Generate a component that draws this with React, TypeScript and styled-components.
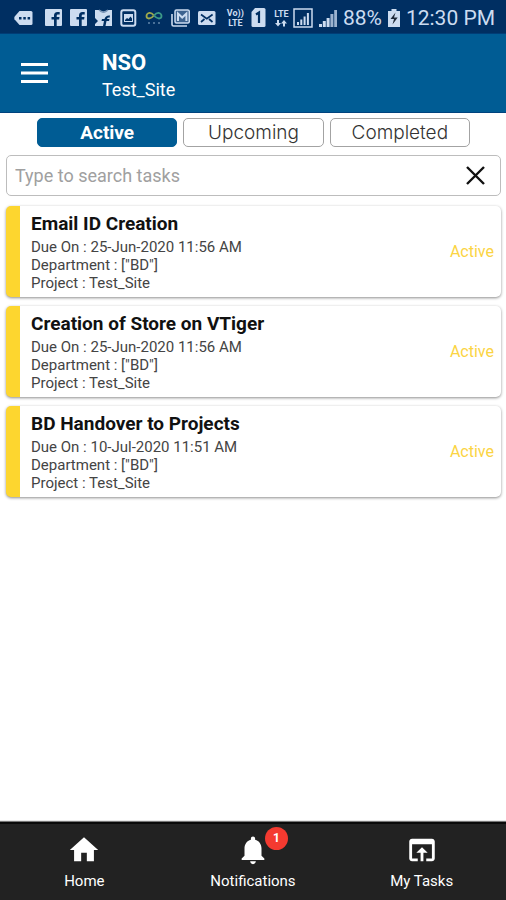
import React, { useState } from 'react';
import styled, { createGlobalStyle } from 'styled-components';

const GlobalStyle = createGlobalStyle`
  *, *::before, *::after { box-sizing: border-box; }
  body { margin: 0; background: #fff; font-family: Roboto, "Liberation Sans", sans-serif; }
  button, input { font-family: inherit; }
`;

const Page = styled.div`
  min-height: 100vh;
  display: flex;
  flex-direction: column;
`;

const StatusBar = styled.div`
  display: flex;
  align-items: center;
  justify-content: space-between;
  height: 34px;
  padding: 2px 11px 0 14px;
  background: #002f62;
  color: #ccdcf0;
  border-bottom: 1px solid #003d76;
`;

const StatusGroup = styled.div<{ $gap: number }>`
  display: flex;
  align-items: center;
  gap: ${({ $gap }) => $gap}px;
  white-space: nowrap;
  svg { display: block; flex: none; }
`;

const StatusText = styled.span`
  font-size: 21px;
  line-height: 24px;
`;

const Network = styled.span`
  display: flex;
  flex-direction: column;
  align-items: center;
  min-width: 19px;
  font-size: 9px;
  font-weight: 700;
  line-height: 10px;
`;

const Header = styled.header`
  display: flex;
  align-items: center;
  gap: 54px;
  height: 79px;
  padding: 0 21px;
  background: #005c94;
  color: #fff;
  border-bottom: 1px solid #00437e;
`;

const IconButton = styled.button`
  display: flex;
  padding: 0;
  border: 0;
  background: none;
  color: inherit;
  cursor: pointer;
`;

const Site = styled.div`
  display: flex;
  flex-direction: column;
  padding-top: 6px;
`;

const SiteTitle = styled.h1`
  margin: 0;
  font-size: 22px;
  font-weight: 700;
  line-height: 28px;
`;

const SiteName = styled.span`
  font-size: 18px;
  line-height: 26px;
`;

const Main = styled.main`
  flex: 1;
  padding: 5px 5px 20px 6px;
`;

const Tabs = styled.div`
  display: grid;
  grid-template-columns: repeat(3, 1fr);
  gap: 6px;
  padding: 0 31px;
`;

const Tab = styled.button<{ $active: boolean }>`
  height: 29px;
  padding: 0;
  border: 1px solid ${({ $active }) => ($active ? '#005c94' : '#a3a3a3')};
  border-radius: 5px;
  background: ${({ $active }) => ($active ? '#005c94' : '#fff')};
  color: ${({ $active }) => ($active ? '#fff' : '#333')};
  font-family: ${({ $active }) => ($active ? 'Roboto' : 'Inter')}, sans-serif;
  font-size: 19px;
  font-weight: ${({ $active }) => ($active ? 700 : 300)};
  line-height: 27px;
  cursor: pointer;
`;

const SearchBox = styled.div`
  display: flex;
  align-items: center;
  height: 41px;
  margin: 8px 0 10px;
  padding: 0 15px 0 8px;
  border: 1px solid #bdbdbd;
  border-radius: 5px;
  color: #111;
`;

const SearchInput = styled.input`
  flex: 1;
  min-width: 0;
  padding: 0;
  border: 0;
  outline: 0;
  background: none;
  color: #222;
  font-size: 18px;
  line-height: 24px;
  &::placeholder { color: #a0a0a0; opacity: 1; }
`;

const TaskList = styled.ul`
  display: flex;
  flex-direction: column;
  gap: 9px;
  margin: 0;
  padding: 0;
  list-style: none;
`;

const TaskCard = styled.li`
  display: flex;
  align-items: center;
  justify-content: space-between;
  min-height: 91px;
  padding: 5px 7px 5px 11px;
  border-left: 14px solid #fdd62f;
  border-radius: 5px;
  background: #fff;
  box-shadow: 0 1px 3px rgba(0, 0, 0, 0.45);
`;

const TaskTitle = styled.h2`
  margin: 0 0 2px;
  color: #111;
  font-size: 19px;
  font-weight: 700;
  line-height: 24px;
`;

const TaskDetail = styled.p`
  margin: 0;
  color: #444;
  font-size: 15px;
  line-height: 18px;
`;

const TaskStatus = styled.span`
  color: #fbd443;
  font-size: 16px;
  line-height: 20px;
`;

const BottomNav = styled.nav`
  position: sticky;
  bottom: 0;
  display: grid;
  grid-template-columns: repeat(3, 1fr);
  height: 78px;
  border-top: 2px solid #0a0a0a;
  background: #222;
  box-shadow: 0 -1px 1px #777;
`;

const NavLink = styled.a`
  display: flex;
  flex-direction: column;
  align-items: center;
  gap: 4px;
  padding-top: 9px;
  color: #fff;
  font-size: 15px;
  line-height: 20px;
  text-decoration: none;
  svg { display: block; }
`;

const NavIcon = styled.span`
  position: relative;
`;

const Badge = styled.span`
  position: absolute;
  top: -6px;
  right: -18px;
  width: 23px;
  height: 23px;
  border-radius: 50%;
  background: #f43a30;
  font-size: 12px;
  font-weight: 700;
  line-height: 23px;
  text-align: center;
`;

const FacebookIcon = () => (
  <svg width="17" height="17" viewBox="0 0 17 17" aria-hidden="true">
    <rect width="17" height="17" rx="1" fill="#ccdcf0" />
    <path d="M9 17v-6.500h-2.500v-2.500h2.500V6.500Q9 3 12.500 3h2.200v2.400h-1.800q-1.200 0-1.200 1.300V8h2.800l-.4 2.500h-2.400V17z" fill="#002f62" />
  </svg>
);

const StatusIcons = () => (
  <StatusGroup $gap={8}>
    <svg width="23" height="16" viewBox="0 0 23 16" aria-hidden="true">
      <path d="M5.500 1H17q1.500 0 1.500 1.500v11q0 1.500-1.500 1.500H5.500L.5 9.200Q0 8 .5 6.800z" fill="#ccdcf0" />
      <path d="M5 7h2.500v2.500H5zM9.300 7h2.500v2.500H9.300zM13.600 7h2.500v2.500h-2.500z" fill="#002f62" />
    </svg>
    <FacebookIcon />
    <FacebookIcon />
    <svg width="17" height="18" viewBox="0 0 17 18" aria-hidden="true">
      <path d="M0 1h4q4.500 5 9 0h4v16H0z" fill="#ccdcf0" />
      <path d="M4 1q4.500 4 9 0" fill="none" stroke="#7f9abb" strokeWidth="1.500" />
      <path d="M8 17l1-5H6.500l.5-2h2.500Q10.500 6 15 6.500l-.5 2.200q-2-.5-2.500 1.300h2.500l-.5 2H11.500l-1 5zM0 9l3 3-3 3z" fill="#002f62" />
    </svg>
    <svg width="17" height="18" viewBox="0 0 17 18" aria-hidden="true">
      <rect x="1.300" y="1.300" width="14" height="15.400" rx="2" fill="none" stroke="#ccdcf0" strokeWidth="2" />
      <path d="M4 5h9v8H4z" fill="#ccdcf0" />
      <path d="M5 11l2-2 1.500 1 2-2.500 1.500 2V12H5z" fill="#002f62" />
    </svg>
    <svg width="18" height="16" viewBox="0 0 18 16" fill="none" aria-hidden="true">
      <path d="M9 5.500Q6.500 2.500 4 3 1.500 3.700 1.500 6T4 8.500Q6.500 8.500 9 5.500" stroke="#9ea94c" strokeWidth="1.800" />
      <path d="M9 5.500Q11.500 2.500 14 3q2.500.7 2.500 3T14 8.500Q11.500 8.500 9 5.500" stroke="#3c9a88" strokeWidth="1.800" />
      <path d="M3 13h2M8 13h2M13 13h2" stroke="#6286ab" strokeWidth="1.500" />
    </svg>
    <svg width="19" height="18" viewBox="0 0 19 18" fill="none" stroke="#ccdcf0" aria-hidden="true">
      <path d="M1 5v10.500Q1 17 2.500 17H16" strokeWidth="1.600" />
      <rect x="4" y="1" width="14.300" height="13" rx="1.500" fill="#3d638f" strokeWidth="1.500" />
      <path d="M7 12V4.500l4.200 4 4.200-4V12" strokeWidth="2" />
    </svg>
    <svg width="18" height="16" viewBox="0 0 18 16" aria-hidden="true">
      <rect y="1" width="17.500" height="14" rx="1.500" fill="#ccdcf0" />
      <path d="M3 4.500l5.800 4.300 5.800-4.300M3 12l3.500-3M14.500 12L11 9" fill="none" stroke="#002f62" strokeWidth="1.700" />
    </svg>
  </StatusGroup>
);

const SignalBars = () => (
  <svg width="18" height="18" viewBox="0 0 18 18" fill="#ccdcf0" aria-hidden="true">
    <path d="M0 15h3v3H0zM3.800 12h3v6h-3zM7.600 9h3v9h-3z" />
    <path d="M11.400 5h3v13h-3zM15.200 1h2.800v17h-2.800z" fill="#9bb3d0" />
  </svg>
);

const PhoneStatus = () => (
  <StatusGroup $gap={6}>
    <Network><span>Vo))</span><span>LTE</span></Network>
    <svg width="15" height="19" viewBox="0 0 15 19" aria-hidden="true">
      <path d="M4 0h9q1.500 0 1.500 1.500v16q0 1.500-1.500 1.500H2Q.5 19 .5 17.500V4z" fill="#ccdcf0" />
      <path d="M5 6.500L8 4.500V15" fill="none" stroke="#002f62" strokeWidth="2.200" />
    </svg>
    <StatusGroup $gap={2}>
      <Network>
        <span>LTE</span>
        <svg width="12" height="8" viewBox="0 0 12 8" fill="#ccdcf0" aria-hidden="true">
          <path d="M2 1h2v3h2L3 7.500 0 4h2zM8 7.500h2v-3h2L9 1 6 4.500h2z" />
        </svg>
      </Network>
      <svg width="20" height="20" viewBox="0 0 20 20" fill="#ccdcf0" aria-hidden="true">
        <rect x="1" y="1" width="18" height="18" fill="none" stroke="#ccdcf0" strokeWidth="1.500" />
        <path d="M4 14h2v3H4zM7.300 11.500h2V17h-2zM10.600 8.500h2V17h-2zM13.900 5h2v12h-2z" />
      </svg>
    </StatusGroup>
    <SignalBars />
    <StatusText>88%</StatusText>
    <svg width="12" height="18" viewBox="0 0 12 18" aria-hidden="true">
      <path d="M3.500 0h5v2H12v16H0V2h3.500z" fill="#ccdcf0" />
      <path d="M7.500 3.500L2.500 10H6l-1.500 5.500L9.700 8.500H6z" fill="#1d2938" />
    </svg>
    <StatusText>12:30 PM</StatusText>
  </StatusGroup>
);

const tasks = [
  { title: 'Email ID Creation', due: '25-Jun-2020 11:56 AM' },
  { title: 'Creation of Store on VTiger', due: '25-Jun-2020 11:56 AM' },
  { title: 'BD Handover to Projects', due: '10-Jul-2020 11:51 AM' },
];

const tabs = ['Active', 'Upcoming', 'Completed'];

export default function App() {
  const [tab, setTab] = useState('Active');
  const [query, setQuery] = useState('');
  const visible = tasks.filter((t) => t.title.toLowerCase().includes(query.toLowerCase()));

  return (
    <Page>
      <GlobalStyle />
      <StatusBar>
        <StatusIcons />
        <PhoneStatus />
      </StatusBar>
      <Header>
        <IconButton type="button" aria-label="Open menu">
          <svg width="27" height="20" viewBox="0 0 27 20" aria-hidden="true">
            <path d="M0 1.500h27M0 10h27M0 18.500h27" stroke="#fff" strokeWidth="3" />
          </svg>
        </IconButton>
        <Site>
          <SiteTitle>NSO</SiteTitle>
          <SiteName>Test_Site</SiteName>
        </Site>
      </Header>
      <Main>
        <Tabs>
          {tabs.map((name) => (
            <Tab key={name} type="button" $active={name === tab} aria-pressed={name === tab} onClick={() => setTab(name)}>
              {name}
            </Tab>
          ))}
        </Tabs>
        <SearchBox>
          <SearchInput
            type="text"
            aria-label="Search tasks"
            placeholder="Type to search tasks"
            value={query}
            onChange={(e) => setQuery(e.target.value)}
          />
          <IconButton type="button" aria-label="Clear search" onClick={() => setQuery('')}>
            <svg width="19" height="19" viewBox="0 0 19 19" aria-hidden="true">
              <path d="M1 1l17 17M18 1L1 18" stroke="currentColor" strokeWidth="2.400" />
            </svg>
          </IconButton>
        </SearchBox>
        <TaskList>
          {visible.map((task) => (
            <TaskCard key={task.title}>
              <div>
                <TaskTitle>{task.title}</TaskTitle>
                <TaskDetail>Due On : {task.due}</TaskDetail>
                <TaskDetail>Department : ["BD"]</TaskDetail>
                <TaskDetail>Project : Test_Site</TaskDetail>
              </div>
              <TaskStatus>Active</TaskStatus>
            </TaskCard>
          ))}
        </TaskList>
      </Main>
      <BottomNav>
        <NavLink href="#home">
          <NavIcon>
            <svg width="34" height="34" viewBox="0 0 24 24" fill="#fff" aria-hidden="true">
              <path d="M10 20v-6h4v6h5v-8h3L12 3 2 12h3v8z" />
            </svg>
          </NavIcon>
          Home
        </NavLink>
        <NavLink href="#notifications">
          <NavIcon>
            <svg width="34" height="34" viewBox="0 0 24 24" fill="#fff" aria-hidden="true">
              <path d="M12 22c1.100 0 2-.9 2-2h-4c0 1.100.89 2 2 2zm6-6v-5c0-3.070-1.640-5.640-4.500-6.320V4c0-.83-.67-1.500-1.500-1.500s-1.500.67-1.500 1.500v.68C7.630 5.360 6 7.920 6 11v5l-2 2v1h16v-1l-2-2z" />
            </svg>
            <Badge>1</Badge>
          </NavIcon>
          Notifications
        </NavLink>
        <NavLink href="#tasks">
          <NavIcon>
            <svg width="34" height="34" viewBox="0 0 24 24" fill="#fff" aria-hidden="true">
              <path d="M19 4H5c-1.110 0-2 .9-2 2v12c0 1.100.89 2 2 2h4v-2H5V8h14v10h-4v2h4c1.100 0 2-.9 2-2V6c0-1.100-.89-2-2-2zm-7 6l-4 4h3v6h2v-6h3l-4-4z" />
            </svg>
          </NavIcon>
          My Tasks
        </NavLink>
      </BottomNav>
    </Page>
  );
}
